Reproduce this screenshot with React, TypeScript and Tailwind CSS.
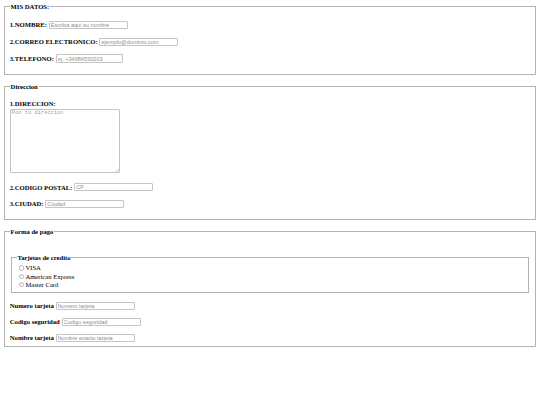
export default function App() {
  const inputCls =
    "h-[8.4px] w-[79px] rounded-[1px] border border-[#c4c4c4] bg-white px-[1px] font-['Liberation_Sans',Arial,sans-serif] text-[5.6px] leading-none text-black placeholder:text-[#8f8f8f] outline-none";

  const Row = ({ label, placeholder, width }: { label: string; placeholder: string; width?: string }) => (
    <div className="flex h-[8.4px] items-center gap-[1.8px]">
      <label className="font-bold">{label}</label>
      <input type="text" placeholder={placeholder} className={`${inputCls} ${width ?? ''}`} />
    </div>
  );

  const cards = ['VISA', 'American Express', 'Master Card'];

  return (
    <div className="min-h-[405px] bg-white px-[4px] pt-[3.2px] font-['Liberation_Serif','Times_New_Roman',serif] text-[6.65px] leading-[7.4px] text-black">
      {/* Datos personales */}
      <fieldset className="border border-[#b3b3b3] px-[4.8px] pb-[11.2px]">
        <legend className="px-[0.8px] font-bold">MIS DATOS:</legend>
        <div className="mt-[10.4px] flex flex-col gap-[8.3px]">
          <Row label="1.NOMBRE:" placeholder="Escriba aqui su nombre" />
          <Row label="2.CORREO ELECTRONICO:" placeholder="ejemplo@dominio.com" />
          <Row label="3.TELEFONO:" placeholder="ej. +34984530203" width="!w-[67px]" />
        </div>
      </fieldset>

      {/* Direccion */}
      <fieldset className="mt-[8.3px] border border-[#b3b3b3] px-[4.8px] pb-[10.8px]">
        <legend className="px-[0.8px] font-bold">Direccion</legend>
        <div className="mt-[8.9px] font-bold">1.DIRECCION:</div>
        <div className="relative mt-[2px] h-[64px] w-[110px]">
          <textarea
            placeholder="Pon tu direccion"
            className="block h-full w-full resize-none rounded-[1px] border border-[#c4c4c4] bg-white px-[1px] py-[0.5px] font-['Liberation_Mono','Courier_New',monospace] text-[5.4px] leading-[6px] placeholder:text-[#a3a3a3] outline-none"
          />
          <svg className="absolute bottom-[1px] right-[1px]" width="4" height="4" viewBox="0 0 4 4">
            <path d="M4 0.8 L0.8 4 M4 2.4 L2.4 4" stroke="#9a9a9a" strokeWidth="0.5" />
          </svg>
        </div>
        <div className="mt-[10.1px] flex flex-col gap-[8.3px]">
          <Row label="2.CODIGO POSTAL:" placeholder="CP" />
          <Row label="3.CIUDAD:" placeholder="Ciudad" />
        </div>
      </fieldset>

      {/* Forma de pago */}
      <fieldset className="mt-[8.2px] border border-[#b3b3b3] px-[4.8px] pb-[4.1px]">
        <legend className="px-[0.8px] font-bold">Forma de pago</legend>
        <fieldset className="mx-[1px] mt-[18.7px] border border-[#b3b3b3] px-[4.8px] pb-[3.5px]">
          <legend className="px-[0.8px] font-bold">Tarjetas de credito</legend>
          <div className="mt-[2.5px] flex flex-col">
            {cards.map((c) => (
              <label key={c} className="flex h-[8.2px] items-center">
                <input
                  type="radio"
                  name="tarjeta"
                  className="ml-[2px] mr-[1.2px] h-[5.6px] w-[5.6px] appearance-none rounded-full border border-[#b5b5b5] bg-white"
                />
                <span>{c}</span>
              </label>
            ))}
          </div>
        </fieldset>
        <div className="mt-[8.7px] flex flex-col gap-[7.6px]">
          <Row label="Numero tarjeta" placeholder="Numero tarjeta" />
          <Row label="Codigo seguridad" placeholder="Codigo seguridad" />
          <Row label="Nombre tarjeta" placeholder="Nombre exacto tarjeta" />
        </div>
      </fieldset>
    </div>
  );
}
